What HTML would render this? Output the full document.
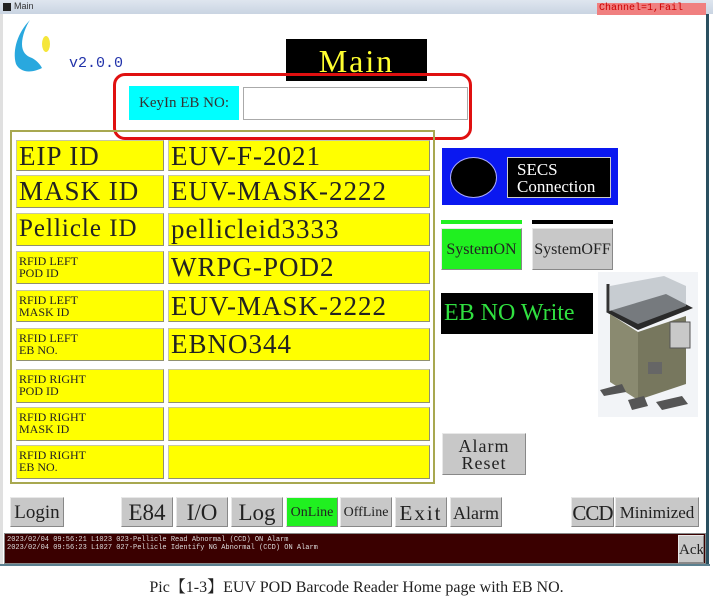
<!DOCTYPE html>
<html><head><style>
*{margin:0;padding:0;box-sizing:border-box}
body{width:713px;height:604px;background:#fff;position:relative;overflow:hidden;font-family:"Liberation Serif","Noto Serif CJK SC",serif}
.a{position:absolute}
.y{position:absolute;background:#ffff00;border:1px solid #c8c8a0;border-right-color:#909070;border-bottom-color:#909070;color:#222;white-space:nowrap;overflow:hidden}
.big{font-size:27px;line-height:30px;padding-left:2px;letter-spacing:1px}
.sm{font-size:12px;line-height:12px;padding:3px 0 0 2px;font-family:"Liberation Serif",serif;letter-spacing:0px}
.btn{position:absolute;background:#c8c8c8;border:1px solid #e8e8e8;border-right-color:#888;border-bottom-color:#888;color:#222;text-align:center;white-space:nowrap;overflow:hidden}
</style></head><body>
<div class="a" style="left:0;top:0;width:713px;height:14px;background:linear-gradient(#dfe6ef,#c9d4e2)"></div>
<div class="a" style="left:3px;top:3px;width:8px;height:8px;background:#222"></div>
<div class="a" style="left:14px;top:1px;font:9px 'Liberation Sans',sans-serif;color:#333">Main</div>
<div class="a" style="left:597px;top:3px;width:109px;height:12px;background:#f08080;font:10px 'Liberation Mono',monospace;color:#c00;line-height:12px;padding-left:2px">Channel=1,Fail</div>
<div class="a" style="left:706px;top:14px;width:3px;height:550px;background:#2a5060"></div>
<div class="a" style="left:0;top:14px;width:3px;height:550px;background:#e0e0e0"></div>
<svg class="a" style="left:8px;top:18px" width="45" height="60"><path d="M22 2 C10 14 4 32 8 46 C12 54 22 56 34 50 C32 46 28 42 24 40 C18 38 14 34 14 26 C14 18 18 8 22 2Z" fill="#29a8de"/><ellipse cx="38" cy="26" rx="4" ry="8" fill="#f5e63a"/></svg>
<div class="a" style="left:69px;top:55px;font:15px 'Liberation Mono',monospace;color:#2233aa">v2.0.0</div>
<div class="a" style="left:286px;top:39px;width:141px;height:42px;background:#000;color:#ffff30;font-size:32px;text-align:center;line-height:44px;letter-spacing:2px">Main</div>
<div class="a" style="left:113px;top:73px;width:359px;height:67px;border:3px solid #e01010;border-radius:12px"></div>
<div class="a" style="left:129px;top:86px;width:110px;height:34px;background:#00ffff;color:#333;font-size:15px;line-height:34px;text-align:center">KeyIn EB NO:</div>
<div class="a" style="left:243px;top:87px;width:225px;height:33px;border:1px solid #aaa;background:#fff"></div>
<div class="a" style="left:10px;top:130px;width:425px;height:354px;border:2px solid #a8a850"></div>
<div class="y big" style="left:16px;top:140px;width:148px;height:31px">EIP ID</div>
<div class="y big" style="left:168px;top:140px;width:262px;height:31px">EUV-F-2021</div>
<div class="y big" style="left:16px;top:175px;width:148px;height:33px">MASK ID</div>
<div class="y big" style="left:168px;top:175px;width:262px;height:33px">EUV-MASK-2222</div>
<div class="y big" style="left:16px;top:213px;width:148px;height:33px;font-size:25px">Pellicle ID</div>
<div class="y big" style="left:168px;top:213px;width:262px;height:33px">pellicleid3333</div>
<div class="y sm" style="left:16px;top:251px;width:148px;height:33px">RFID LEFT<br>POD ID</div>
<div class="y big" style="left:168px;top:251px;width:262px;height:33px">WRPG-POD2</div>
<div class="y sm" style="left:16px;top:290px;width:148px;height:32px">RFID LEFT<br>MASK ID</div>
<div class="y big" style="left:168px;top:290px;width:262px;height:32px">EUV-MASK-2222</div>
<div class="y sm" style="left:16px;top:328px;width:148px;height:33px">RFID LEFT<br>EB NO.</div>
<div class="y big" style="left:168px;top:328px;width:262px;height:33px">EBNO344</div>
<div class="y sm" style="left:16px;top:369px;width:148px;height:34px">RFID RIGHT<br>POD ID</div>
<div class="y" style="left:168px;top:369px;width:262px;height:34px"></div>
<div class="y sm" style="left:16px;top:407px;width:148px;height:34px">RFID RIGHT<br>MASK ID</div>
<div class="y" style="left:168px;top:407px;width:262px;height:34px"></div>
<div class="y sm" style="left:16px;top:445px;width:148px;height:34px">RFID RIGHT<br>EB NO.</div>
<div class="y" style="left:168px;top:445px;width:262px;height:34px"></div>
<div class="a" style="left:442px;top:148px;width:176px;height:57px;background:#0a18f0"></div>
<div class="a" style="left:450px;top:157px;width:47px;height:41px;border-radius:50%;background:#000;border:1px solid #aaf"></div>
<div class="a" style="left:507px;top:157px;width:104px;height:41px;background:#000;border:1px solid #ccc;color:#fff;font-size:17px;line-height:17px;padding:3px 0 0 9px">SECS<br>Connection</div>
<div class="a" style="left:441px;top:220px;width:81px;height:4px;background:#20f020"></div>
<div class="a" style="left:532px;top:220px;width:81px;height:4px;background:#000"></div>
<div class="btn" style="left:441px;top:228px;width:81px;height:42px;background:#20f020;font-size:16px;line-height:42px">SystemON</div>
<div class="btn" style="left:532px;top:228px;width:81px;height:42px;font-size:16px;line-height:42px">SystemOFF</div>
<svg class="a" style="left:598px;top:272px" width="100" height="145">
<rect x="0" y="0" width="100" height="145" fill="#f2f4f7"/>
<polygon points="8,40 68,22 95,36 40,58" fill="#2a2a2a"/>
<polyline points="10,12 10,40 M10,12 66,2 90,12 90,36" stroke="#333" stroke-width="3" fill="none"/>
<polygon points="12,14 66,4 88,14 88,34 40,52 12,38" fill="#aab0b8" opacity=".6"/>
<polygon points="12,42 40,60 40,128 12,110" fill="#8a8a70"/>
<polygon points="40,60 88,44 88,112 40,128" fill="#77775e"/>
<rect x="72" y="50" width="20" height="26" fill="#c8c8c8" stroke="#555"/>
<rect x="50" y="90" width="14" height="12" fill="#666"/>
<polygon points="2,118 24,112 28,120 6,124" fill="#555"/>
<polygon points="58,130 84,124 90,132 64,138" fill="#555"/>
<polygon points="30,128 46,124 50,134 34,138" fill="#555"/>
</svg>
<div class="a" style="left:441px;top:293px;width:152px;height:41px;background:#000;color:#30e040;font-size:24px;line-height:41px;padding-left:3px;white-space:nowrap;overflow:hidden">EB NO Write</div>
<div class="btn" style="left:442px;top:433px;width:84px;height:42px;font-size:18px;line-height:17px;padding-top:4px;letter-spacing:1px">Alarm<br>Reset</div>
<div class="btn" style="left:10px;top:497px;width:54px;height:30px;font-size:19px;line-height:30px">Login</div>
<div class="btn" style="left:121px;top:497px;width:52px;height:30px;font-size:23px;line-height:30px">E84</div>
<div class="btn" style="left:176px;top:497px;width:52px;height:30px;font-size:23px;line-height:30px">I/O</div>
<div class="btn" style="left:231px;top:497px;width:52px;height:30px;font-size:23px;line-height:30px">Log</div>
<div class="btn" style="left:286px;top:497px;width:52px;height:30px;background:#20f020;font-size:14px;line-height:30px">OnLine</div>
<div class="btn" style="left:340px;top:497px;width:52px;height:30px;font-size:14px;line-height:30px">OffLine</div>
<div class="btn" style="left:395px;top:497px;width:52px;height:30px;font-size:21px;line-height:30px;letter-spacing:2px">Exit</div>
<div class="btn" style="left:450px;top:497px;width:52px;height:30px;font-size:18px;line-height:30px">Alarm</div>
<div class="btn" style="left:571px;top:497px;width:43px;height:30px;font-size:21px;line-height:30px;letter-spacing:-1px">CCD</div>
<div class="btn" style="left:615px;top:497px;width:84px;height:30px;font-size:17px;line-height:30px">Minimized</div>
<div class="a" style="left:4px;top:533px;width:702px;height:31px;background:#3a0000;border:1px solid #888"></div>
<div class="a" style="left:7px;top:536px;font:7px 'Liberation Mono',monospace;color:#ddd;line-height:8px;white-space:nowrap">2023/02/04 09:56:21 L1023 023-Pellicle Read Abnormal (CCD) ON Alarm<br>2023/02/04 09:56:23 L1027 027-Pellicle Identify NG Abnormal (CCD) ON Alarm</div>
<div class="btn" style="left:678px;top:535px;width:26px;height:28px;font-size:15px;line-height:28px">Ack</div>
<div class="a" style="left:0;top:564px;width:710px;height:2px;background:#5a8090"></div>
<div class="a" style="left:0;top:574px;width:713px;text-align:center;font-size:16px;color:#222">Pic【1-3】EUV POD Barcode Reader Home page with EB NO.</div>
</body></html>
